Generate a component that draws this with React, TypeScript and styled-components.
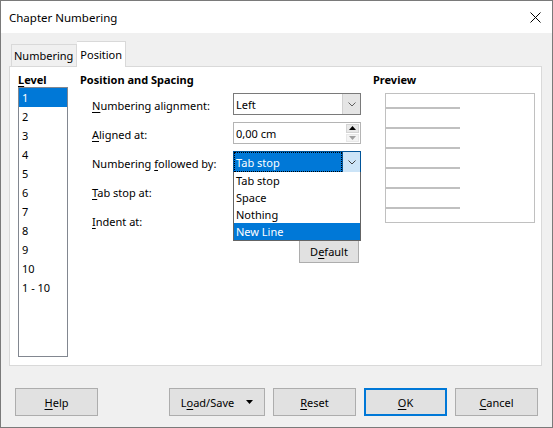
import React from 'react';
import styled, { createGlobalStyle, css } from 'styled-components';

const GlobalStyle = createGlobalStyle`
  html, body {
    margin: 0;
    padding: 0;
    background: #f0f0f0;
  }
  body {
    font-family: "Noto Sans", "Open Sans", sans-serif;
    font-size: 11px;
    color: #000;
  }
  * {
    box-sizing: border-box;
  }
`;

const Window = styled.div`
  width: 553px;
  height: 428px;
  border: 1px solid #7a7a7a;
  display: flex;
  flex-direction: column;
  background: #f0f0f0;
`;

const TitleBar = styled.div`
  height: 32px;
  flex-shrink: 0;
  background: #fff;
  display: flex;
  align-items: center;
  justify-content: space-between;
  padding: 0 10px 0 8px;
  font-size: 11.5px;
`;

const CloseButton = styled.div`
  width: 14px;
  height: 14px;
  display: flex;
  align-items: center;
  justify-content: center;
`;

const Body = styled.div`
  flex: 1;
  display: flex;
  flex-direction: column;
  padding: 8px 10px 0 8px;
`;

const TabStrip = styled.div`
  display: flex;
  align-items: flex-end;
  padding-left: 2px;
  height: 25px;
  position: relative;
  z-index: 1;
`;

const Tab = styled.div<{ $active?: boolean }>`
  border: 1px solid #d9d9d9;
  border-bottom: none;
  padding: 0 3px;
  display: flex;
  align-items: center;
  ${(p) =>
    p.$active
      ? css`
          height: 26px;
          margin-bottom: -1px;
          background: #fff;
          border-left: none;
        `
      : css`
          height: 22px;
          background: #f0f0f0;
          padding-left: 2px;
        `}
`;

const Panel = styled.div`
  height: 300px;
  background: #fff;
  border: 1px solid #d9d9d9;
  display: flex;
  padding: 6px 0 0 8px;
  gap: 12px;
`;

const Column = styled.div<{ $width: number }>`
  width: ${(p) => p.$width}px;
  display: flex;
  flex-direction: column;
`;

const Heading = styled.div`
  height: 14px;
  line-height: 14px;
  font-weight: bold;
`;

const U = styled.span`
  text-decoration: underline;
  text-underline-offset: 2px;
`;

const LevelList = styled.div`
  height: 270px;
  border: 1px solid #828790;
  display: flex;
  flex-direction: column;
`;

const LevelItem = styled.div<{ $selected?: boolean }>`
  height: 19px;
  line-height: 19px;
  padding-left: 3px;
  background: ${(p) => (p.$selected ? '#0078d7' : 'transparent')};
  color: ${(p) => (p.$selected ? '#fff' : '#000')};
`;

const Rows = styled.div`
  margin-top: 6px;
  display: flex;
  flex-direction: column;
  gap: 7px;
`;

const Row = styled.div`
  display: flex;
  align-items: center;
  height: 22px;
  padding-left: 12px;
`;

const Label = styled.div`
  width: 141px;
  padding-top: 2px;
`;

const Field = styled.div<{ $focused?: boolean; $light?: boolean }>`
  position: relative;
  width: 128px;
  height: 22px;
  border: 1px solid ${(p) => (p.$focused ? '#005499' : p.$light ? '#b4b4b4' : '#7a7a7a')};
  background: #fff;
  display: flex;
`;

const FieldText = styled.div<{ $selected?: boolean }>`
  flex: 1;
  display: flex;
  align-items: center;
  padding-left: 2px;
  margin: 1px 0;
  ${(p) =>
    p.$selected &&
    css`
      background: #0078d7;
      color: #fff;
      outline: 1px dotted #000;
      outline-offset: -1px;
      margin: 0;
    `}
`;

const DropButton = styled.div<{ $focused?: boolean }>`
  width: 18px;
  display: flex;
  align-items: center;
  justify-content: center;
  background: ${(p) => (p.$focused ? '#cce4f7' : '#e5e5e5')};
  border-left: 1px solid ${(p) => (p.$focused ? '#005499' : '#d0d0d0')};
`;

const SpinButtons = styled.div`
  width: 13px;
  margin: 1px 1px 1px 0;
  display: flex;
  flex-direction: column;
  gap: 1px;
`;

const SpinHalf = styled.div<{ $disabled?: boolean }>`
  flex: 1;
  display: flex;
  align-items: center;
  justify-content: center;
  background: ${(p) => (p.$disabled ? '#f4f4f4' : '#e8e8e8')};
  border: 1px solid ${(p) => (p.$disabled ? '#e8e8e8' : '#d4d4d4')};
`;

const Popup = styled.div`
  position: absolute;
  top: 100%;
  left: -1px;
  width: 128px;
  background: #fff;
  border: 1px solid #646464;
  border-top: none;
  z-index: 5;
`;

const PopupItem = styled.div<{ $selected?: boolean }>`
  height: 17px;
  line-height: 17px;
  padding-left: 2px;
  background: ${(p) => (p.$selected ? '#0078d7' : '#fff')};
  color: ${(p) => (p.$selected ? '#fff' : '#000')};
`;

const DefaultRow = styled.div`
  display: flex;
  justify-content: flex-end;
  margin-top: 9px;
  padding-right: 2px;
`;

const PreviewBox = styled.div`
  margin: 6px 0 0 12px;
  width: 150px;
  height: 130px;
  border: 1px solid #c0c0c0;
  background: #fff;
  display: flex;
  flex-direction: column;
  padding-top: 13px;
  gap: 18px;
`;

const PreviewLine = styled.div`
  width: 74px;
  height: 2px;
  background: #c0c0c0;
`;

const Footer = styled.div`
  display: flex;
  align-items: center;
  padding: 22px 4px 11px 6px;
  gap: 8px;
`;

const Spacer = styled.div`
  flex: 1;
`;

const Button = styled.div<{ $width?: number; $height?: number; $default?: boolean }>`
  width: ${(p) => p.$width ?? 83}px;
  height: ${(p) => p.$height ?? 28}px;
  background: #e1e1e1;
  border: ${(p) => (p.$default ? '2px solid #0078d7' : '1px solid #adadad')};
  display: flex;
  align-items: center;
  justify-content: center;
  gap: 12px;
`;

const Chevron = ({ color = '#606060' }: { color?: string }) => (
  <svg width="8" height="5" viewBox="0 0 8 5">
    <polyline points="0.5,0.5 4,4 7.5,0.5" fill="none" stroke={color} strokeWidth="1" />
  </svg>
);

const Triangle = ({ up, color }: { up?: boolean; color: string }) => (
  <svg width="7" height="4" viewBox="0 0 7 4">
    <polygon points={up ? '0,4 7,4 3.5,0' : '0,0 7,0 3.5,4'} fill={color} />
  </svg>
);

// spin field; the ones under the open popup are left empty
const Spin = ({ value }: { value?: string }) => (
  <Field $light>
    <FieldText>{value}</FieldText>
    <SpinButtons>
      <SpinHalf>
        <Triangle up color="#000" />
      </SpinHalf>
      <SpinHalf $disabled>
        <Triangle color="#a0a0a0" />
      </SpinHalf>
    </SpinButtons>
  </Field>
);

const levels = ['1', '2', '3', '4', '5', '6', '7', '8', '9', '10', '1 - 10'];
const followOptions = ['Tab stop', 'Space', 'Nothing', 'New Line'];

export default function App() {
  return (
    <>
      <GlobalStyle />
      <Window>
        <TitleBar>
          <span>Chapter Numbering</span>
          <CloseButton>
            <svg width="11" height="11" viewBox="0 0 11 11">
              <path d="M0.5 0.5 L10.5 10.5 M10.5 0.5 L0.5 10.5" stroke="#000" strokeWidth="1" />
            </svg>
          </CloseButton>
        </TitleBar>
        <Body>
          <TabStrip>
            <Tab>Numbering</Tab>
            <Tab $active>Position</Tab>
          </TabStrip>
          <Panel>
            <Column $width={50}>
              <Heading>
                <U>L</U>evel
              </Heading>
              <LevelList>
                {levels.map((l, i) => (
                  <LevelItem key={l} $selected={i === 0}>
                    {l}
                  </LevelItem>
                ))}
              </LevelList>
            </Column>
            <Column $width={281}>
              <Heading>Position and Spacing</Heading>
              <Rows>
                <Row>
                  <Label>
                    <U>N</U>umbering alignment:
                  </Label>
                  <Field>
                    <FieldText>Left</FieldText>
                    <DropButton>
                      <Chevron />
                    </DropButton>
                  </Field>
                </Row>
                <Row>
                  <Label>
                    <U>A</U>ligned at:
                  </Label>
                  <Spin value="0,00 cm" />
                </Row>
                <Row>
                  <Label>
                    Numbering <U>f</U>ollowed by:
                  </Label>
                  <Field $focused>
                    <FieldText $selected>Tab stop</FieldText>
                    <DropButton $focused>
                      <Chevron color="#404040" />
                    </DropButton>
                    <Popup>
                      {followOptions.map((o, i) => (
                        <PopupItem key={o} $selected={i === 3}>
                          {o}
                        </PopupItem>
                      ))}
                    </Popup>
                  </Field>
                </Row>
                <Row>
                  <Label>
                    <U>T</U>ab stop at:
                  </Label>
                  <Spin />
                </Row>
                <Row>
                  <Label>
                    <U>I</U>ndent at:
                  </Label>
                  <Spin />
                </Row>
              </Rows>
              <DefaultRow>
                <Button $width={60} $height={23}>
                  <span>
                    D<U>e</U>fault
                  </span>
                </Button>
              </DefaultRow>
            </Column>
            <Column $width={162}>
              <Heading>Preview</Heading>
              <PreviewBox>
                {Array.from({ length: 6 }).map((_, i) => (
                  <PreviewLine key={i} />
                ))}
              </PreviewBox>
            </Column>
          </Panel>
          <Footer>
            <Button>
              <span>
                <U>H</U>elp
              </span>
            </Button>
            <Spacer />
            <Button $width={96}>
              <span>
                L<U>o</U>ad/Save
              </span>
              <Triangle color="#000" />
            </Button>
            <Button>
              <span>
                <U>R</U>eset
              </span>
            </Button>
            <Button $default>
              <span>
                <U>O</U>K
              </span>
            </Button>
            <Button>
              <span>
                <U>C</U>ancel
              </span>
            </Button>
          </Footer>
        </Body>
      </Window>
    </>
  );
}
